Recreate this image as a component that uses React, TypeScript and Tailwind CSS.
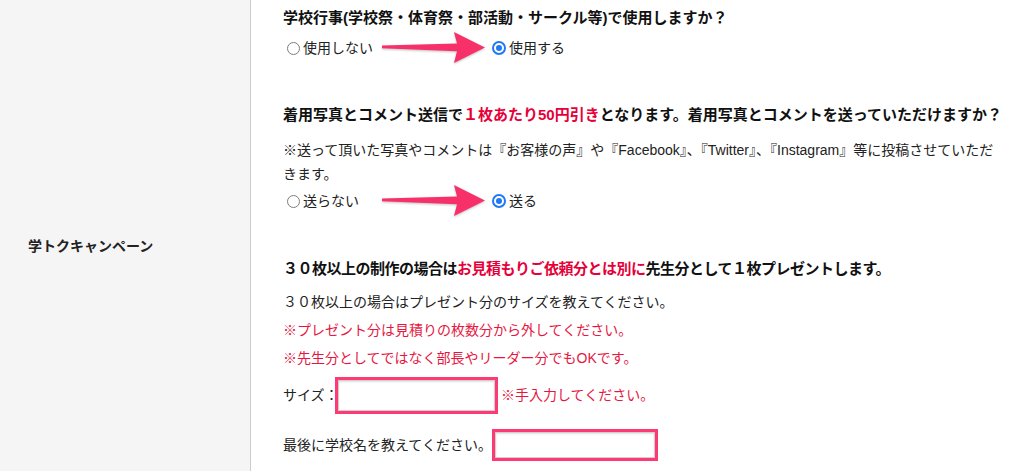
import React from "react";

const FONT = { fontFamily: '"Liberation Sans", "Noto Sans CJK JP", sans-serif' };

function Arrow() {
  return (
    <svg width="105" height="34" viewBox="0 0 105 34" className="shrink-0 drop-shadow-[0_1px_1px_rgba(0,0,0,0.25)]">
      <path d="M0,14.6 L75,12.4 L72,1 L103,16.5 L72,32 L75,20.2 L0,17.2 Z" fill="#f8306a" />
    </svg>
  );
}

function Radio({ checked, label }: { checked?: boolean; label: string }) {
  return (
    <div className="flex items-center gap-[3px] whitespace-nowrap text-[14px] leading-[24px] text-[#222]">
      {checked ? (
        <span className="flex h-[14px] w-[14px] shrink-0 items-center justify-center rounded-full border-[2px] border-[#1f78f5] bg-white">
          <span className="h-[6px] w-[6px] rounded-full bg-[#1f78f5]" />
        </span>
      ) : (
        <span className="h-[13px] w-[13px] shrink-0 rounded-full border border-[#7d7d7d] bg-white" />
      )}
      <span>{label}</span>
    </div>
  );
}

function RadioRow({ off, on }: { off: string; on: string }) {
  return (
    <div className="flex h-[24px] items-center">
      <div className="w-[99px] pl-[4px]">
        <Radio label={off} />
      </div>
      <Arrow />
      <div className="ml-[5px]">
        <Radio checked label={on} />
      </div>
    </div>
  );
}

function MarkedInput({ w, h }: { w: string; h: string }) {
  return (
    <div className={`shrink-0 border-[3px] border-[#fe3a74] bg-white ${w} ${h}`}>
      <div className="h-full w-full border border-[#cfcfcf] shadow-[inset_0_1px_2px_rgba(0,0,0,0.12)]" />
    </div>
  );
}

export default function App() {
  return (
    <div style={FONT} className="flex h-[471px] w-[1025px] overflow-hidden bg-white">
      <div className="w-[251px] shrink-0 border-r border-[#cccccc] bg-[#f5f5f5] pl-[28px] pt-[236px]">
        <div className="text-[14px] font-bold leading-[20px] text-[#222]">学トクキャンペーン</div>
      </div>
      <div className="flex flex-col pl-[32px] text-[#222]">
        <div className="mt-[6px] whitespace-nowrap text-[15px] font-bold leading-[24px] text-[#111]">
          学校行事(学校祭・体育祭・部活動・サークル等)で使用しますか？
        </div>
        <div className="mt-[6px]">
          <RadioRow off="使用しない" on="使用する" />
        </div>
        <div className="mt-[43px] whitespace-nowrap text-[15px] font-bold leading-[24px] text-[#111]">
          着用写真とコメント送信で<span className="text-[#e6003a]">１枚あたり50円引き</span>となります。着用写真とコメントを送っていただけますか？
        </div>
        <div className="mt-[11px] whitespace-nowrap text-[14px] leading-[24px]">
          ※送って頂いた写真やコメントは『お客様の声』や『Facebook』、『Twitter』、『Instagram』等に投稿させていただ
          <br />
          きます。
        </div>
        <div className="mt-[3px]">
          <RadioRow off="送らない" on="送る" />
        </div>
        <div className="mt-[44px] whitespace-nowrap text-[15px] font-bold leading-[24px] tracking-[-0.5px] text-[#111]">
          ３０枚以上の制作の場合は<span className="text-[#e6003a]">お見積もりご依頼分とは別に</span>先生分として１枚プレゼントします。
        </div>
        <div className="mt-[7px] whitespace-nowrap text-[14px] leading-[28px]">
          <div>３０枚以上の場合はプレゼント分のサイズを教えてください。</div>
          <div className="text-[#e6173f]">※プレゼント分は見積りの枚数分から外してください。</div>
          <div className="text-[#e6173f]">※先生分としてではなく部長やリーダー分でもOKです。</div>
        </div>
        <div className="mt-[5px] flex items-center whitespace-nowrap text-[14px]">
          <span className="w-[52px] shrink-0">サイズ：</span>
          <MarkedInput w="w-[163px]" h="h-[37px]" />
          <span className="ml-[3px] text-[#e6173f]">※手入力してください。</span>
        </div>
        <div className="mt-[15px] flex items-center whitespace-nowrap text-[14px]">
          <span className="w-[209px] shrink-0">最後に学校名を教えてください。</span>
          <MarkedInput w="w-[166px]" h="h-[32px]" />
        </div>
      </div>
    </div>
  );
}
